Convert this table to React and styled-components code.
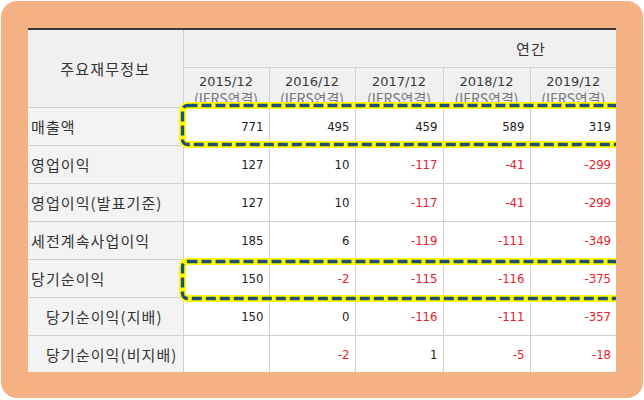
import styled, { createGlobalStyle } from "styled-components";

const GlobalStyle = createGlobalStyle`
  html, body {
    margin: 0;
    padding: 0;
    background: #fff;
  }
`;

const colWidths = [155, 86, 86, 88, 87, 86];
const years = ["2015/12", "2016/12", "2017/12", "2018/12", "2019/12"];

const rows = [
  { label: "매출액", values: [771, 495, 459, 589, 319] },
  { label: "영업이익", values: [127, 10, -117, -41, -299] },
  { label: "영업이익(발표기준)", values: [127, 10, -117, -41, -299] },
  { label: "세전계속사업이익", values: [185, 6, -119, -111, -349] },
  { label: "당기순이익", values: [150, -2, -115, -116, -375] },
  { label: "당기순이익(지배)", values: [150, 0, -116, -111, -357], sub: true },
  { label: "당기순이익(비지배)", values: [null, -2, 1, -5, -18], sub: true },
];

// yellow + navy dashed callouts over the highlighted rows
const marks = [
  { top: 74, height: 46 },
  { top: 230, height: 44 },
];

const MARK_W = 444;

const Highlight = ({ top, height }) => (
  <Mark $top={top} $h={height}>
    <svg width={MARK_W} height={height}>
      <rect
        x="3.5"
        y="3.5"
        width={MARK_W - 7}
        height={height - 7}
        rx="5"
        fill="none"
        stroke="#ffff00"
        strokeWidth="7"
      />
      <rect
        x="3.5"
        y="3.5"
        width={MARK_W - 7}
        height={height - 7}
        rx="5"
        fill="none"
        stroke="#1f4e79"
        strokeWidth="3.4"
        strokeDasharray="10 4"
      />
    </svg>
  </Mark>
);

const App = () => {
  return (
    <>
      <GlobalStyle />
      <Frame>
        <Clip>
          <Table>
            <colgroup>
              {colWidths.map((w, i) => (
                <Col key={i} $w={w} />
              ))}
            </colgroup>
            <thead>
              <tr>
                <HeadCell rowSpan={2}>주요재무정보</HeadCell>
                <PeriodCell colSpan={5}>연간</PeriodCell>
              </tr>
              <tr>
                {years.map((y) => (
                  <YearCell key={y}>
                    <YearInner>
                      <Year>{y}</Year>
                      <Basis>(IFRS연결)</Basis>
                    </YearInner>
                  </YearCell>
                ))}
              </tr>
            </thead>
            <tbody>
              {rows.map((r) => (
                <tr key={r.label}>
                  <LabelCell $sub={r.sub}>{r.label}</LabelCell>
                  {r.values.map((v, i) => (
                    <NumCell key={i} $neg={v < 0}>
                      {v === null ? "" : v}
                    </NumCell>
                  ))}
                </tr>
              ))}
            </tbody>
          </Table>
          {marks.map((m) => (
            <Highlight key={m.top} {...m} />
          ))}
        </Clip>
      </Frame>
    </>
  );
};

const Frame = styled.div`
  margin: 1px;
  width: 642px;
  height: 397px;
  box-sizing: border-box;
  padding: 27px 27px 26px;
  background: #f4b183;
  border-radius: 16px;
`;
const Clip = styled.div`
  position: relative;
  width: 588px;
  height: 344px;
  overflow: hidden;
  background: #fff;
`;
const Table = styled.table`
  width: 588px;
  table-layout: fixed;
  border-collapse: collapse;
  border-top: 2px solid #3a3a3a;
  font-family: "Noto Sans CJK KR", "Liberation Sans", sans-serif;
  color: #333;
`;
const Col = styled.col`
  width: ${(p) => p.$w}px;
`;
const HeadCell = styled.th`
  height: 77px;
  padding: 0;
  background: #f0f0f0;
  border-right: 1px solid #d0d0d0;
  border-bottom: 1px solid #d0d0d0;
  font-size: 15px;
  font-weight: normal;
  letter-spacing: 1.2px;
  text-align: center;
  vertical-align: middle;
`;
const PeriodCell = styled.th`
  height: 37px;
  padding: 0 70px 0 0;
  background: #f0f0f0;
  border-bottom: 1px solid #d0d0d0;
  font-size: 15px;
  font-weight: normal;
  letter-spacing: 1.2px;
  text-align: right;
`;
const YearCell = styled.th`
  height: 39px;
  padding: 0;
  background: #f0f0f0;
  border-right: 1px solid #d0d0d0;
  border-bottom: 1px solid #d0d0d0;
  font-weight: normal;
  &:last-child {
    border-right: none;
  }
`;
const YearInner = styled.div`
  height: 39px;
  padding-top: 6px;
  box-sizing: border-box;
  overflow: hidden;
  display: flex;
  flex-direction: column;
  align-items: center;
`;
const Year = styled.div`
  font-family: "DejaVu Sans", "Noto Sans CJK KR", sans-serif;
  font-size: 13px;
  line-height: 16px;
  color: #3a3a3a;
`;
const Basis = styled.div`
  font-family: "Noto Sans CJK KR", sans-serif;
  font-size: 14px;
  line-height: 16px;
  color: #777;
`;
const LabelCell = styled.td`
  height: 37px;
  padding: 0 0 0 ${(p) => (p.$sub ? "18px" : "3px")};
  background: #f3f3f3;
  border-right: 1px solid #d0d0d0;
  border-bottom: 1px solid #d0d0d0;
  font-size: 15px;
  letter-spacing: 1.1px;
  white-space: nowrap;
`;
const NumCell = styled.td`
  height: 37px;
  padding: 0 5px 0 0;
  border-right: 1px solid #d0d0d0;
  border-bottom: 1px solid #d0d0d0;
  font-family: "DejaVu Sans Condensed", "Liberation Sans", sans-serif;
  font-size: 13px;
  text-align: right;
  color: ${(p) => (p.$neg ? "#e8202a" : "#222")};
  &:last-child {
    border-right: none;
  }
`;
const Mark = styled.div`
  position: absolute;
  left: 151px;
  top: ${(p) => p.$top}px;
  width: ${MARK_W}px;
  height: ${(p) => p.$h}px;
  pointer-events: none;
  svg {
    display: block;
  }
`;

export default App;
